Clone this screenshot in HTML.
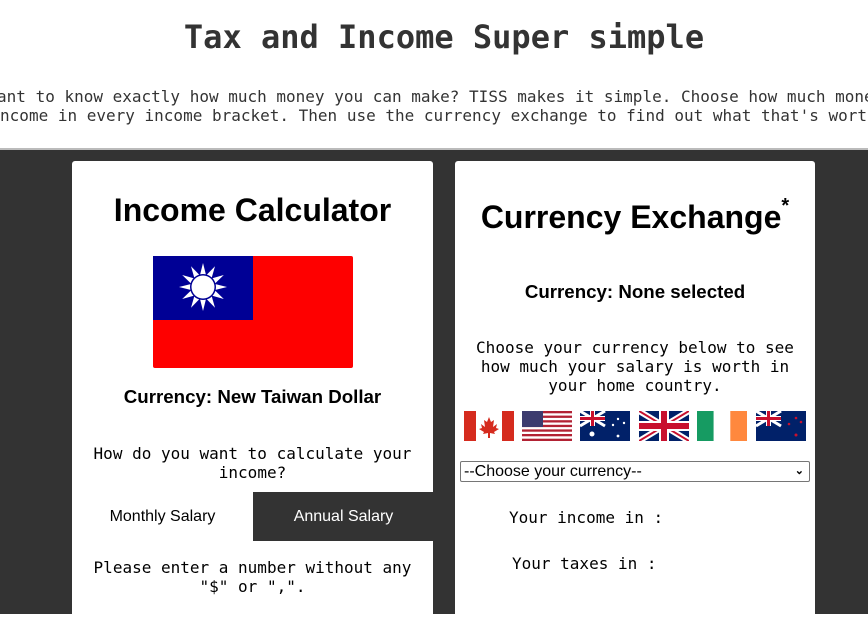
<!DOCTYPE html>
<html><head><meta charset="utf-8"><style>
*{margin:0;padding:0;box-sizing:border-box}
body{width:868px;height:614px;overflow:hidden;background:#fff;position:relative;font-family:"DejaVu Sans Mono",monospace;color:#333}
.abs{position:absolute;white-space:nowrap}
h1{position:absolute;top:18px;left:0;width:888px;text-align:center;font:bold 32px "DejaVu Sans Mono",monospace;color:#333}
.p{font-size:16px;line-height:19px}
.dark{position:absolute;top:148px;left:0;width:868px;height:466px;background:#333;border-top:2px solid #bbb}
.card{position:absolute;top:161px;height:470px;background:#fff;border-radius:3px;color:#000}
.c{text-align:center;width:100%;left:0}
.h{font:bold 32px "Liberation Sans",Arial,sans-serif}
.cur{font:bold 18.72px "Liberation Sans",Arial,sans-serif}
.m{font-size:16px;line-height:19px;color:#000}
</style></head><body>
<h1>Tax and Income Super simple</h1>
<div class="abs p" style="left:-12.6px;top:87px">want to know exactly how much money you can make? TISS makes it simple. Choose how much money</div>
<div class="abs p" style="left:-9.6px;top:106px">income in every income bracket. Then use the currency exchange to find out what that's worth</div>
<div class="dark"></div>
<div class="card" style="left:72px;width:361px">
 <div class="abs c h" style="top:31px">Income Calculator</div>
 <svg class="abs" style="left:81px;top:95px" width="200" height="112" viewBox="0 0 200 112">
  <rect width="200" height="112" rx="2" fill="#fe0000"/><rect width="100" height="64" fill="#000095"/>
  <g transform="translate(50,31)" fill="#fff">
   <g id="r"><polygon points="0,-24 3,-12 -3,-12"/></g>
   <use href="#r" transform="rotate(30)"/><use href="#r" transform="rotate(60)"/><use href="#r" transform="rotate(90)"/><use href="#r" transform="rotate(120)"/><use href="#r" transform="rotate(150)"/><use href="#r" transform="rotate(180)"/><use href="#r" transform="rotate(210)"/><use href="#r" transform="rotate(240)"/><use href="#r" transform="rotate(270)"/><use href="#r" transform="rotate(300)"/><use href="#r" transform="rotate(330)"/>
   <circle r="13" fill="#000095"/><circle r="11.5"/>
  </g></svg>
 <div class="abs c cur" style="top:225px">Currency: New Taiwan Dollar</div>
 <div class="abs c m" style="top:283px">How do you want to calculate your<br>income?</div>
 <div class="abs" style="left:0;top:331px;width:181px;height:49px;font:16px 'Liberation Sans',Arial,sans-serif;text-align:center;line-height:49px">Monthly Salary</div>
 <div class="abs" style="left:181px;top:331px;width:181px;height:49px;background:#333;color:#fff;font:16px 'Liberation Sans',Arial,sans-serif;text-align:center;line-height:49px">Annual Salary</div>
 <div class="abs c m" style="top:397px">Please enter a number without any<br>"$" or ",".</div>
</div>
<div class="card" style="left:455px;width:360px">
 <div class="abs c h" style="top:38px">Currency Exchange<sup style="font-size:20px;position:relative;top:-4px">*</sup></div>
 <div class="abs c cur" style="top:120px">Currency: None selected</div>
 <div class="abs c m" style="top:177px">Choose your currency below to see<br>how much your salary is worth in<br>your home country.</div>
 <svg class="abs" style="left:9px;top:250px" width="50" height="30" viewBox="0 0 50 30"><rect width="50" height="30" fill="#fff"/><rect width="12" height="30" fill="#d52b1e"/><rect x="38" width="12" height="30" fill="#d52b1e"/><polygon points="25,6 27,11 30,9 29,16 33,13 32,17 35,18 30,21 31,23 26,22 26,27 24,27 24,22 19,23 20,21 15,18 18,17 17,13 21,16 20,9 23,11" fill="#d52b1e"/></svg>
 <svg class="abs" style="left:67px;top:250px" width="50" height="30" viewBox="0 0 50 30"><rect width="50" height="30" fill="#fff"/><g fill="#b22234"><rect y="0" width="50" height="2.3"/><rect y="4.6" width="50" height="2.3"/><rect y="9.2" width="50" height="2.3"/><rect y="13.8" width="50" height="2.3"/><rect y="18.4" width="50" height="2.3"/><rect y="23" width="50" height="2.3"/><rect y="27.7" width="50" height="2.3"/></g><rect width="21" height="16" fill="#3c3b6e"/></svg>
 <svg class="abs" style="left:125px;top:250px" width="50" height="30" viewBox="0 0 50 30"><rect width="50" height="30" fill="#012169"/><path d="M0 0L25 15M25 0L0 15" stroke="#fff" stroke-width="3"/><path d="M12.5 0V15M0 7.5H25" stroke="#fff" stroke-width="5"/><path d="M12.5 0V15M0 7.5H25" stroke="#c8102e" stroke-width="3"/><g fill="#fff"><circle cx="12" cy="23" r="2.5"/><circle cx="38" cy="8" r="1.2"/><circle cx="33" cy="14" r="1.2"/><circle cx="44" cy="12" r="1.2"/><circle cx="38" cy="25" r="1.4"/></g></svg>
 <svg class="abs" style="left:184px;top:250px" width="50" height="30" viewBox="0 0 50 30"><rect width="50" height="30" fill="#012169"/><path d="M0 0L50 30M50 0L0 30" stroke="#fff" stroke-width="6"/><path d="M0 0L50 30M50 0L0 30" stroke="#c8102e" stroke-width="2"/><path d="M25 0V30M0 15H50" stroke="#fff" stroke-width="10"/><path d="M25 0V30M0 15H50" stroke="#c8102e" stroke-width="6"/></svg>
 <svg class="abs" style="left:242px;top:250px" width="50" height="30" viewBox="0 0 50 30"><rect width="16.7" height="30" fill="#169b62"/><rect x="16.7" width="16.6" height="30" fill="#fff"/><rect x="33.3" width="16.7" height="30" fill="#ff883e"/></svg>
 <svg class="abs" style="left:301px;top:250px" width="50" height="30" viewBox="0 0 50 30"><rect width="50" height="30" fill="#012169"/><path d="M0 0L25 15M25 0L0 15" stroke="#fff" stroke-width="3"/><path d="M12.5 0V15M0 7.5H25" stroke="#fff" stroke-width="5"/><path d="M12.5 0V15M0 7.5H25" stroke="#c8102e" stroke-width="3"/><g fill="#c8102e"><circle cx="40" cy="7" r="1.3"/><circle cx="33" cy="13" r="1.3"/><circle cx="45" cy="11" r="1.3"/><circle cx="40" cy="24" r="1.5"/></g></svg>
 <div class="abs" style="left:5px;top:300px;width:350px;height:21px;border:1px solid #767676;border-radius:2px;font:16px 'Liberation Sans',Arial,sans-serif;line-height:19px;padding-left:3px">--Choose your currency--<span style="position:absolute;right:5px;top:0;font-size:11px;font-weight:bold">&#8964;</span></div>
 <div class="abs m" style="left:54px;top:347px">Your income in :</div>
 <div class="abs m" style="left:57px;top:393px">Your taxes in :</div>
</div>
</body></html>
